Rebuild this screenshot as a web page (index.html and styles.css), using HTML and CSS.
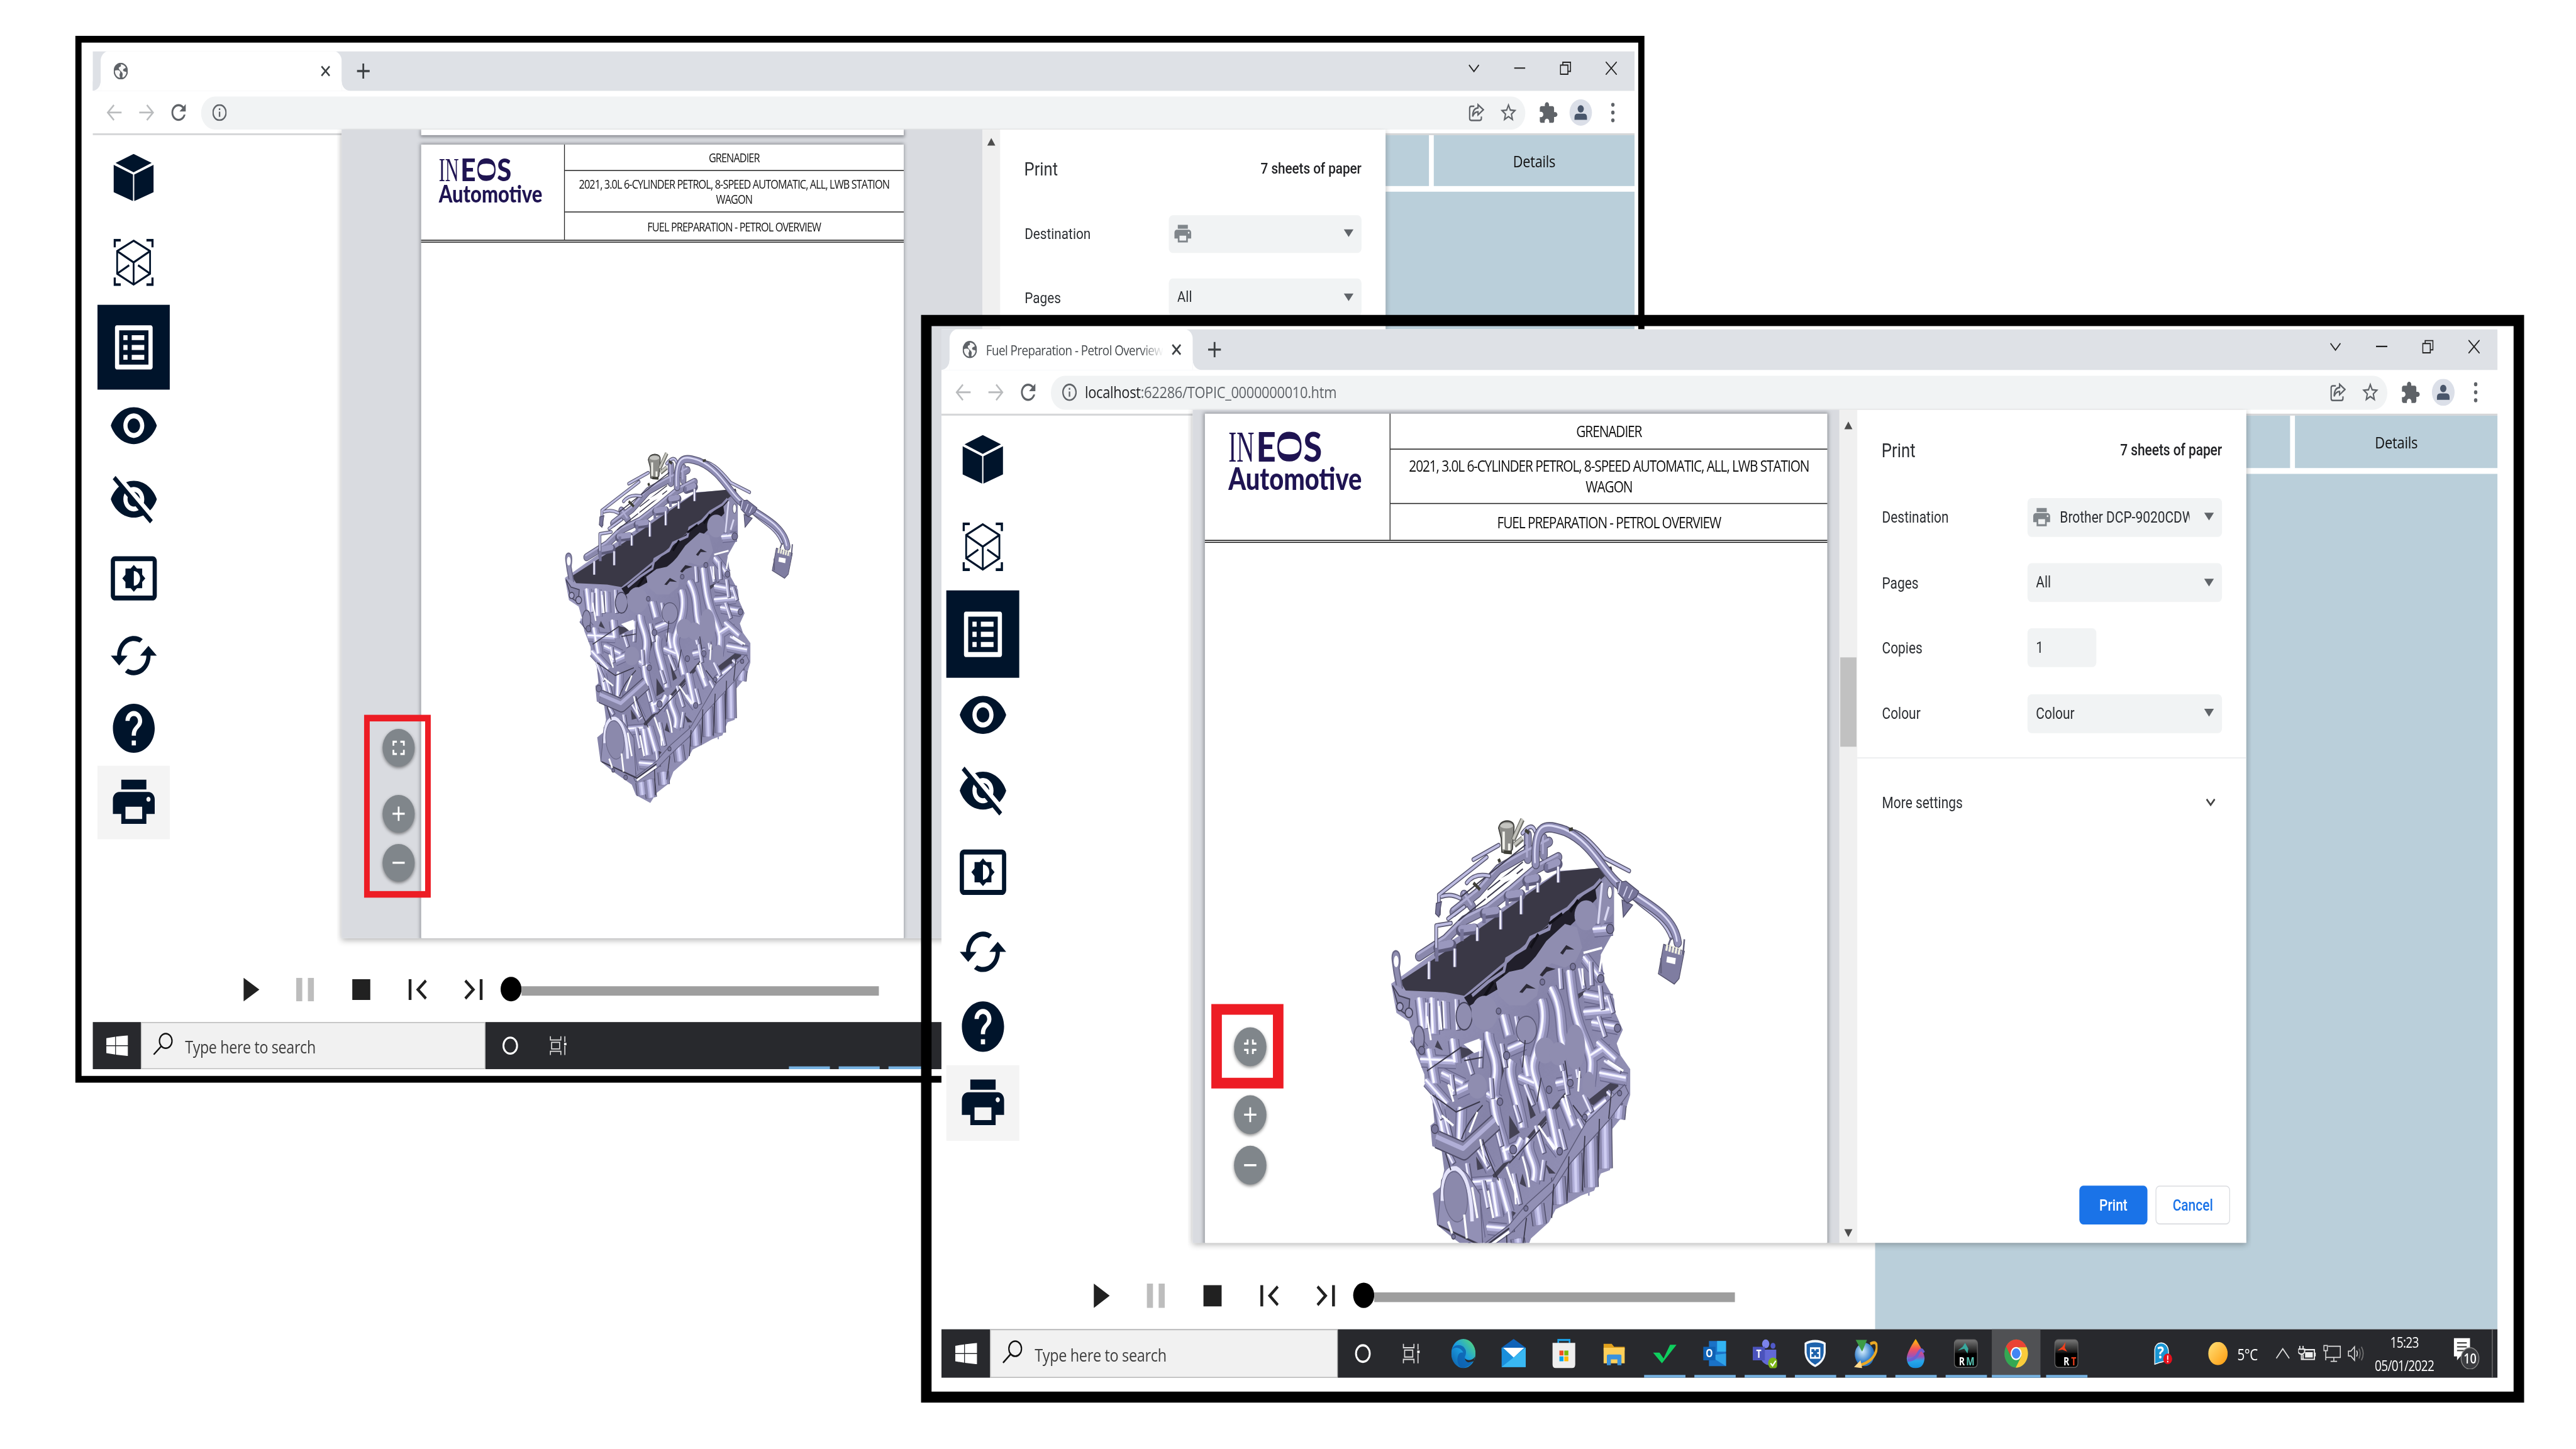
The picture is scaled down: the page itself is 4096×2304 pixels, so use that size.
FILE: index.html
```html
<!DOCTYPE html>
<html lang="en">
<head>
<meta charset="utf-8">
<title>Print preview zoom controls</title>
<link rel="stylesheet" href="styles.css">
</head>
<body>
<svg class="sprite" aria-hidden="true">
  <defs>
    <linearGradient id="g-body" x1="0" y1="0" x2="1" y2="1"><stop offset="0" stop-color="#a3a1c6"/><stop offset=".5" stop-color="#8583a8"/><stop offset="1" stop-color="#9c9abf"/></linearGradient>
    <linearGradient id="g-edge" x1="0" y1="1" x2="1" y2="0"><stop offset="0" stop-color="#0c59a4"/><stop offset=".5" stop-color="#1b9de2"/><stop offset="1" stop-color="#5fe06a"/></linearGradient>
    <linearGradient id="g-sun" x1="0" y1="0" x2="1" y2="1"><stop offset="0" stop-color="#ffe27a"/><stop offset="1" stop-color="#ff9a0c"/></linearGradient>
    <linearGradient id="g-app" x1="0" y1="0" x2="0" y2="1"><stop offset="0" stop-color="#777"/><stop offset=".45" stop-color="#1a1a1a"/><stop offset=".5" stop-color="#000"/></linearGradient>
    <linearGradient id="g-drop" x1="0" y1="0" x2="0" y2="1"><stop offset="0" stop-color="#ffc800"/><stop offset=".35" stop-color="#f4515c"/><stop offset=".6" stop-color="#a050b8"/><stop offset=".75" stop-color="#28a8ea"/><stop offset="1" stop-color="#1590e0"/></linearGradient>
    <radialGradient id="g-globe" cx=".4" cy=".35"><stop offset="0" stop-color="#d8f0ff"/><stop offset="1" stop-color="#2a78c8"/></radialGradient>
  </defs>

  <symbol id="i-cube" viewBox="0 0 50 50"><path d="M25 0 47.500 9.500 25 19.500 2.500 9.500zM0 11.500 24.200 21.800V50L0 40.500zM50 11.500 25.800 21.800V50L50 40.500z"/></symbol>
  <symbol id="i-wire" viewBox="0 0 50 50"><g fill="none" stroke="currentColor" stroke-width="2.200"><path d="M25 2 45.500 13V37L25 48.500 4.500 37V13zM4.500 13 25 25 45.500 13M25 25V48M4.500 37 19.500 28M45.500 37 30.500 28"/><path stroke-width="2.800" d="M1.400 9V1.400H9M41 1.400H48.600V9M1.400 41V48.600H9M41 48.600H48.600V41"/></g></symbol>
  <symbol id="i-list" viewBox="0 0 24 24"><path d="M19 5v14H5V5h14m1.100-2H3.900c-.5 0-.9.4-.9.9v16.200c0 .4.4.9.9.9h16.200c.4 0 .9-.5.9-.9V3.900c0-.5-.5-.9-.9-.9zM11 7h6v2h-6V7zm0 4h6v2h-6v-2zm0 4h6v2h-6zM7 7h2v2H7zm0 4h2v2H7zm0 4h2v2H7z"/></symbol>
  <symbol id="i-eye" viewBox="0 0 24 24"><path d="M12 4.500C7 4.500 2.730 7.610 1 12c1.730 4.390 6 7.500 11 7.500s9.270-3.110 11-7.500c-1.730-4.390-6-7.500-11-7.500zM12 17c-2.760 0-5-2.240-5-5s2.240-5 5-5 5 2.240 5 5-2.240 5-5 5zm0-8c-1.660 0-3 1.340-3 3s1.340 3 3 3 3-1.340 3-3-1.340-3-3-3z"/></symbol>
  <symbol id="i-eyeoff" viewBox="0 0 24 24"><path d="M12 4.500C7 4.500 2.730 7.610 1 12c1.730 4.390 6 7.500 11 7.500s9.270-3.110 11-7.500c-1.730-4.390-6-7.500-11-7.500zM12 17c-2.760 0-5-2.240-5-5s2.240-5 5-5 5 2.240 5 5-2.240 5-5 5zm0-8c-1.660 0-3 1.340-3 3s1.340 3 3 3 3-1.340 3-3-1.340-3-3-3z"/><path d="M4 2.200 22.200 20.400" stroke="#fff" stroke-width="2"/><path d="M2.600 3.200 20.400 21.200" stroke="currentColor" stroke-width="1.900"/></symbol>
  <symbol id="i-bright" viewBox="0 0 24 24"><path d="M21 3H3c-1.100 0-2 .9-2 2v14c0 1.100.9 2 2 2h18c1.100 0 2-.9 2-2V5c0-1.100-.9-2-2-2zm0 16.010H3V4.990h18v14.020zM8 16h2.500l1.500 1.500 1.500-1.500H16v-2.500l1.500-1.500-1.500-1.500V8h-2.500L12 6.500 10.500 8H8v2.500L6.500 12 8 13.500V16zm4-7c1.660 0 3 1.340 3 3s-1.340 3-3 3V9z"/></symbol>
  <symbol id="i-cycle" viewBox="0 0 24 24"><path d="M19 8l-4 4h3c0 3.310-2.690 6-6 6-1.010 0-1.970-.25-2.800-.7l-1.460 1.460C8.970 19.540 10.430 20 12 20c4.420 0 8-3.580 8-8h3l-4-4zM6 12c0-3.310 2.690-6 6-6 1.010 0 1.970.25 2.800.7l1.460-1.460C15.030 4.460 13.570 4 12 4c-4.420 0-8 3.580-8 8H1l4 4 4-4H6z"/></symbol>
  <symbol id="i-help" viewBox="0 0 24 24"><path d="M12 2C6.480 2 2 6.480 2 12s4.480 10 10 10 10-4.480 10-10S17.520 2 12 2zm1 17h-2v-2h2v2zm2.070-7.750l-.9.920C13.450 12.900 13 13.500 13 15h-2v-.5c0-1.100.45-2.100 1.170-2.830l1.240-1.260c.37-.36.59-.86.59-1.410 0-1.100-.9-2-2-2s-2 .9-2 2H8c0-2.210 1.790-4 4-4s4 1.790 4 4c0 .88-.36 1.680-.93 2.250z"/></symbol>
  <symbol id="i-print" viewBox="0 0 24 24"><path d="M19 8H5c-1.660 0-3 1.340-3 3v6h4v4h12v-4h4v-6c0-1.660-1.340-3-3-3zm-3 11H8v-5h8v5zm3-7c-.55 0-1-.45-1-1s.45-1 1-1 1 .45 1 1-.45 1-1 1zm-1-9H6v4h12V3z"/></symbol>
  <symbol id="i-full" viewBox="0 0 24 24"><path d="M7 14H5v5h5v-2H7v-3zm-2-4h2V7h3V5H5v5zm12 7h-3v2h5v-5h-2v3zM14 5v2h3v3h2V5h-5z"/></symbol>
  <symbol id="i-fullexit" viewBox="0 0 24 24"><path d="M5 16h3v3h2v-5H5v2zm3-8H5v2h5V5H8v3zm6 11h2v-3h3v-2h-5v5zm2-11V5h-2v5h5V8h-3z"/></symbol>
  <symbol id="i-plus" viewBox="0 0 24 24"><path d="M19 13h-6v6h-2v-6H5v-2h6V5h2v6h6z"/></symbol>
  <symbol id="i-minus" viewBox="0 0 24 24"><path d="M5 11h14v2H5z"/></symbol>
  <symbol id="i-globe" viewBox="0 0 20 20"><circle cx="10" cy="10" r="9.900"/><path d="M2 9.500C4.500 8.500 8 8.500 9 10.500 10 12.500 7.500 13.500 8.500 15.500L9 18C4.500 17.500 1.500 13.500 2 9.500zM7.500 7.500C6.500 5 9 5.500 10 4.500 10.800 3.500 9.500 2 10 2 13 1.800 15.500 3.500 16.800 5.500 17 7 14.500 6.500 13.500 8 12.500 9.500 14 10.500 15.500 10.500 17 10.500 18 11 17.800 12 17 15.500 14.500 17.300 12.500 17.800 11.500 16.500 13 15 12.500 13 12 11 9 10 7.500 7.500z" fill="#fff" opacity=".95"/></symbol>
  <symbol id="i-info" viewBox="2 2 20 20"><path d="M11 7h2v2h-2zm0 4h2v6h-2zm1-9C6.480 2 2 6.480 2 12s4.480 10 10 10 10-4.480 10-10S17.520 2 12 2zm0 18c-4.410 0-8-3.590-8-8s3.590-8 8-8 8 3.590 8 8-3.590 8-8 8z"/></symbol>
  <symbol id="i-reload" viewBox="3 3 18 18"><path d="M17.650 6.350C16.200 4.900 14.210 4 12 4c-4.420 0-7.990 3.580-7.990 8s3.570 8 7.990 8c3.730 0 6.840-2.550 7.730-6h-2.080c-.82 2.330-3.040 4-5.650 4-3.310 0-6-2.690-6-6s2.690-6 6-6c1.660 0 3.140.69 4.220 1.780L13 11h7V4l-2.350 2.350z"/></symbol>
  <symbol id="i-back" viewBox="0 0 20 20"><path d="M19 10H2M9.500 2 1.800 10l7.700 8" fill="none" stroke="currentColor" stroke-width="1.900"/></symbol>
  <symbol id="i-fwd" viewBox="0 0 20 20"><path d="M1 10H18M10.500 2 18.200 10l-7.700 8" fill="none" stroke="currentColor" stroke-width="1.900"/></symbol>
  <symbol id="i-share" viewBox="0 0 24 24"><g fill="none" stroke="currentColor" stroke-width="2"><path d="M9 4H4.500Q2 4 2 6.500V19.500Q2 22 4.500 22H17Q19.500 22 19.500 19.500V17"/><path d="M14.500 2 22.500 8.500 14.500 15V11Q9 11 6.500 17 6.500 6.500 14.500 6z"/></g></symbol>
  <symbol id="i-star" viewBox="1 1 22 22"><path d="M22 9.240l-7.190-.62L12 2 9.190 8.630 2 9.240l5.460 4.730L5.820 21 12 17.270 18.180 21l-1.630-7.030L22 9.240zM12 15.400l-3.760 2.270 1-4.280-3.320-2.880 4.380-.38L12 6.100l1.710 4.040 4.380.38-3.320 2.880 1 4.280L12 15.400z"/></symbol>
  <symbol id="i-ext" viewBox="1 0 23 23"><path d="M20.500 11H19V7c0-1.100-.9-2-2-2h-4V3.500C13 2.120 11.880 1 10.500 1S8 2.120 8 3.500V5H4c-1.100 0-1.990.9-1.990 2v3.800H3.500c1.490 0 2.700 1.210 2.700 2.700s-1.210 2.700-2.700 2.700H2V20c0 1.100.9 2 2 2h3.800v-1.500c0-1.490 1.210-2.700 2.700-2.700 1.490 0 2.700 1.210 2.700 2.700V22H17c1.100 0 2-.9 2-2v-4h1.500c1.380 0 2.500-1.120 2.500-2.500S21.880 11 20.500 11z"/></symbol>
  <symbol id="i-person" viewBox="0 0 36 36"><circle cx="18" cy="18" r="18" fill="#dbdfe8"/><circle cx="18" cy="13" r="5" fill="#49566b"/><path d="M8 28V24.500Q8 19.500 13 19.500H23Q28 19.500 28 24.500V28z" fill="#49566b"/></symbol>
  <symbol id="i-kebab" viewBox="0 0 6 24"><circle cx="3" cy="3" r="2.300"/><circle cx="3" cy="12" r="2.300"/><circle cx="3" cy="21" r="2.300"/></symbol>
  <symbol id="i-x" viewBox="0 0 12 12"><path d="M1 1 11 11M11 1 1 11" fill="none" stroke="currentColor" stroke-width="1.900"/></symbol>
  <symbol id="i-add" viewBox="0 0 16 16"><path d="M8 0V16M0 8H16" fill="none" stroke="currentColor" stroke-width="2.200"/></symbol>
  <symbol id="i-wdown" viewBox="0 0 16 16"><path d="M1 4 8 12 15 4" fill="none" stroke="currentColor" stroke-width="1.500"/></symbol>
  <symbol id="i-expand" viewBox="0 0 12 12"><path d="M1 3 6 9 11 3" fill="none" stroke="currentColor" stroke-width="2"/></symbol>
  <symbol id="i-wmin" viewBox="0 0 14 14"><path d="M0 6.800H14" stroke="currentColor" stroke-width="1.400"/></symbol>
  <symbol id="i-wmax" viewBox="0 0 14 14"><path d="M.7 3.700H10V13.300H.7zM3.700 3.500V.7H13.300V10.300H10.200" fill="none" stroke="currentColor" stroke-width="1.300"/></symbol>
  <symbol id="i-wclose" viewBox="0 0 14 14"><path d="M0 0 14 14M14 0 0 14" stroke="currentColor" stroke-width="1.300"/></symbol>
  <symbol id="i-play" viewBox="0 0 25 25"><path d="M3 0 22.600 12.500 3 25z"/></symbol>
  <symbol id="i-pause" viewBox="0 0 25 25"><path d="M1.500 0H9V25H1.500zM16 0H23.500V25H16z"/></symbol>
  <symbol id="i-stop" viewBox="0 0 25 25"><path d="M1.300 1.500H23.700V23.500H1.300z"/></symbol>
  <symbol id="i-prev" viewBox="0 0 25 25"><path d="M1.500 1.500H5V23.500H1.500z"/><path d="M23 3 13 12.500 23 22" fill="none" stroke="currentColor" stroke-width="3.200"/></symbol>
  <symbol id="i-next" viewBox="0 0 25 25"><path d="M20 1.500H23.500V23.500H20z"/><path d="M2 3 12 12.500 2 22" fill="none" stroke="currentColor" stroke-width="3.200"/></symbol>

  <symbol id="t-win" viewBox="0 0 27 22"><path d="M0 3 11 1.600V10.500H0zM12 1.400 27 0V10.500H12zM0 11.500H11V20.400L0 19zM12 11.500H27V22L12 20.600z" fill="#fff"/></symbol>
  <symbol id="t-search" viewBox="0 0 25 24"><circle cx="16" cy="9" r="7.800" fill="none" stroke="#111" stroke-width="1.700"/><path d="M10.500 14.500 1 23.500" stroke="#111" stroke-width="1.800"/></symbol>
  <symbol id="t-cortana" viewBox="0 0 30 30"><circle cx="15" cy="15" r="8.500" fill="none" stroke="#fff" stroke-width="2.300"/></symbol>
  <symbol id="t-view" viewBox="0 0 30 30"><path d="M3 5V9H16V5M3 25V21H16V25M4.500 11.500H14.500V18.500H4.500zM21 5V11M21 15V25" fill="none" stroke="#ddd" stroke-width="1.300"/><path d="M20 12H23V14.500H20z" fill="#fff"/></symbol>
  <symbol id="t-edge" viewBox="0 0 30 30"><circle cx="15" cy="15" r="15" fill="url(#g-edge)"/><path d="M1 11C3 5 15 4 18 12 19 17 16 18 17 20 20 23 27 22 28.500 20 26 27 18 30 13 29.800 8 28 6 21 9 16 11 13 15 14 15 14 11 8 4 8 1 11z" fill="#0d5eae" opacity=".8"/><path d="M17 20C20 23 27 22 29.500 18L28 23 21 24Q17 23 17 20z" fill="#28292d"/></symbol>
  <symbol id="t-mail" viewBox="0 0 30 30"><path d="M0 9 15 0 30 9V13H0z" fill="#0e62b8"/><path d="M0 9H30V29H0z" fill="#1a8fdc"/><path d="M30 9V29H0z" fill="#39b8f3"/><path d="M2 9H28L15 19z" fill="#fff"/></symbol>
  <symbol id="t-store" viewBox="0 0 30 30"><path d="M8 8V1H22V8" fill="none" stroke="#1b9de2" stroke-width="2"/><path d="M1 4H29V26Q29 30 25 30H5Q1 30 1 26z" fill="#eee"/><path d="M9.500 12H14.500V17H9.500z" fill="#f25022"/><path d="M15.500 12H20.500V17H15.500z" fill="#7fba00"/><path d="M9.500 18H14.500V23H9.500z" fill="#00a4ef"/><path d="M15.500 18H20.500V23H15.500z" fill="#ffb900"/></symbol>
  <symbol id="t-folder" viewBox="0 0 30 30"><path d="M2 5H12L15 8H28V12H2z" fill="#e0a01c"/><path d="M2 9H28V25H2z" fill="#fdcf5a"/><path d="M6 17Q6 16 8 16H22Q24 16 24 17V27H19V21H11V27H6z" fill="#3a92dc"/></symbol>
  <symbol id="t-check" viewBox="0 0 30 30"><path d="M1 14H9L14 20 22 6H30L12 25z" fill="#0fce5e"/></symbol>
  <symbol id="t-outlook" viewBox="0 0 30 30"><path d="M8 2H29V28H8z" fill="#1a72c8"/><path d="M18 2H29V13H18z" fill="#33b4f2"/><path d="M8 17 29 28V15z" fill="#2fa2e8"/><path d="M1 8H16V22H1z" fill="#0f61b4"/><text x="8.500" y="19" class="glyph">O</text></symbol>
  <symbol id="t-teams" viewBox="0 0 30 30"><circle cx="16" cy="5" r="4.500" fill="#7b83eb"/><circle cx="25" cy="7" r="3" fill="#5059c9"/><path d="M10 11H29V20Q27 27 20 27 12 26 10 20z" fill="#6269d6"/><path d="M0 8H15V22H0z" fill="#4b53bc"/><text x="7.500" y="19.500" class="glyph">T</text><circle cx="25" cy="25" r="6" fill="#7cb516"/><path d="M22 25 24.500 27.500 28.500 22.500" fill="none" stroke="#fff" stroke-width="1.600"/></symbol>
  <symbol id="t-shield" viewBox="0 0 30 30"><path d="M15 1Q22 1 28 4V14Q27 24 15 29 3 24 2 14V4Q8 1 15 1z" fill="#f4f8fc"/><path d="M15 3.500Q21 3.500 25.500 5.500V14Q25 22 15 26.500 5 22 4.500 14V5.500Q9 3.500 15 3.500z" fill="#1d62ac"/><path d="M9.500 9.500H20.500V19.500H9.500zM9 14.500H12.500M17.500 14.500H21M15 9V12M15 17V20" fill="none" stroke="#fff" stroke-width="1.800"/></symbol>
  <symbol id="t-idm" viewBox="0 0 30 30"><circle cx="14" cy="16" r="12" fill="url(#g-globe)"/><path d="M3 1H17L11 13z" fill="#3d9c46"/><path d="M21 5Q30 1 29 10 26 23 8 27" fill="none" stroke="#eaa926" stroke-width="3"/><path d="M9 22 1 29 11 30z" fill="#ffd88a"/></symbol>
  <symbol id="t-drop" viewBox="0 0 30 30"><path d="M15 0Q26 14 26 20 25 30 15 30 5 30 4 20 4 14 15 0z" fill="url(#g-drop)"/><path d="M5 22Q14 22 18 15T25 14" fill="none" stroke="#6b5fd0" stroke-width="3"/></symbol>
  <symbol id="t-rm" viewBox="0 0 30 30"><rect x=".8" y=".8" width="28.400" height="28.400" rx="4" fill="url(#g-app)" stroke="#666"/><path d="M14 4 18 10 17 15 13 10 5 12 11 8z" fill="#38a89d"/><text x="10" y="27" class="glyph">R</text><text x="20.500" y="27" class="glyph teal">M</text></symbol>
  <symbol id="t-rt" viewBox="0 0 30 30"><rect x=".8" y=".8" width="28.400" height="28.400" rx="4" fill="url(#g-app)" stroke="#666"/><path d="M14 3 13 9 16 13 10 11 4 12 10 8z" fill="#f0401c"/><text x="15" y="27" class="glyph">R</text><text x="24" y="27" class="glyph red">T</text></symbol>
  <symbol id="t-chrome" viewBox="0 0 30 30"><circle cx="15" cy="15" r="14.500" fill="#34a853"/><path d="M2.500 7.500A14.500 14.500 0 0 1 28 8.500H15L8.500 18z" fill="#ea4335"/><path d="M28 8.500A14.500 14.500 0 0 1 14.500 29.500L21 18.500Q22 12 18 8.500z" fill="#fbcb3b"/><circle cx="15" cy="15" r="6.800" fill="#fff"/><circle cx="15" cy="15" r="5.300" fill="#4285f4"/></symbol>
  <symbol id="t-help" viewBox="0 0 24 24"><path d="M2 8Q3 1 10 1 19 2 19 11 19 20 9 21L2 23z" fill="#1996d4" stroke="#fff"/><text x="9.500" y="17" class="glyph big">?</text><circle cx="18" cy="17.500" r="5.500" fill="#e5101c"/><path d="M17.300 14H18.700V18.500H17.300zM17.300 19.500H18.700V21H17.300z" fill="#fff"/></symbol>
  <symbol id="t-sun" viewBox="0 0 24 24"><circle cx="12" cy="12" r="12" fill="url(#g-sun)"/></symbol>
  <symbol id="t-up" viewBox="0 0 20 12"><path d="M2 11 10 1 18 11" fill="none" stroke="#ddd" stroke-width="1.300"/></symbol>
  <symbol id="t-batt" viewBox="0 0 22 16"><path d="M7 4H20V14H6V9M21 7V11M2 0V3M6 0V3M0 3.500H8V6Q7 8.500 4 8.500 1 8.500 0 6zM4 8.500V14H6" fill="none" stroke="#eee" stroke-width="1.400"/><path d="M8.500 6.500H18V12H8.500z" fill="#eee"/></symbol>
  <symbol id="t-net" viewBox="0 0 22 18"><path d="M6 1.500H21V13H3V7M13 13V17M9 17H17M.7.7H5V6H.7zM3 6V16" fill="none" stroke="#ddd" stroke-width="1.200"/></symbol>
  <symbol id="t-vol" viewBox="0 0 22 18"><path d="M1 6.500H4L8.500 2V16L4 11.500H1zM11 6Q13 9 11 12" fill="none" stroke="#ddd" stroke-width="1.200"/><path d="M14 4Q17 9 14 14M17 2Q21.500 9 17 16" fill="none" stroke="#777" stroke-width="1.200"/></symbol>
  <symbol id="t-note" viewBox="0 0 34 32"><path d="M0 0H20V19H8L4 23V19H0z" fill="#fff"/><path d="M4 5H16M4 9H16M4 13H16" stroke="#333" stroke-width="1.300"/><circle cx="20" cy="21" r="11" fill="#3b3c40" stroke="#888"/><text x="20" y="26.500" class="glyph wide">10</text></symbol>

  <symbol id="engine" viewBox="0 0 1500 1568" preserveAspectRatio="none">
    <defs>
      <path id="e-runners" d="M800 620C850 690 825 740 850 790M868 570C880 650 885 700 925 770S950 850 945 905M762 655C790 720 750 790 735 830S755 900 775 980M562 750C560 790 600 820 590 880S575 960 615 1060L635 1125M650 830C630 880 670 920 692 1030M845 945 885 1025M795 975 825 1090M715 1060C700 1110 755 1130 735 1185M605 1180 640 1275M535 1090 570 1150M305 650 318 740M352 650 358 755M395 660 400 740M340 800 362 900M372 950 405 1090M460 970 455 1080M690 1060 660 1110M580 1190 600 1290M500 1180 530 1350M430 770 440 840M620 700 640 760M700 820 715 880"/>
      <path id="e-fine" d="M330 660V735M375 655 380 740M440 650 445 740M480 820 500 870M535 770 530 850M610 780 625 850M665 700 680 770M830 560 835 620M845 860 860 930M905 560 920 620M945 540 950 610M980 610 990 680M920 930 950 980M420 870 430 930M350 930 385 1000M400 1000 420 1060M500 1060 560 1140M540 1180 560 1260M590 1020 610 1080M655 1160 680 1250M700 900 730 960M740 1020 770 1100M830 1030 850 1090M900 1000 920 1030M770 1120 760 1180M410 1100 430 1130M480 1130 490 1180M640 1270 650 1330M460 1290 470 1330M510 1300 530 1360M975 700 1000 760M1010 640 1030 690M1000 830 1060 860M1010 920 1060 960M660 960 680 1010M820 800 840 860M890 830 900 880M570 880 575 940M300 730 310 790"/>
      <path id="e-stubs" d="M925 640 1028 655M925 692 1025 685M955 722 1050 735M975 780 1045 830M985 870 1085 885M925 530 985 590M960 450 1030 445M440 925 510 900M500 1190 580 1185M560 930 605 950M640 800 700 780M560 1320 630 1325M310 830 440 835M390 870 470 900M330 890 410 960M930 1000 1010 950M620 1100 680 1080M790 1060 830 1100M680 880 740 900M820 900 880 890M950 820 1000 795M280 760 320 800"/>
      <path id="e-pan" d="M605 1380 615 1450M672 1350 678 1400M745 1250 755 1310M825 1170 832 1250M888 1100 892 1215M945 1050 950 1200M1000 1000 1003 1145M1055 960 1050 1000M565 1390 572 1440"/>
      <path id="e-pipe" d="M368 1060 470 1095 590 1010"/>
      <path id="e-harness" d="M740 255C732 130 780 140 850 158 960 195 1000 290 1070 325 1150 370 1262 405 1275 485"/>
      <path id="e-thin" d="M505 242 600 200M375 345 555 235M375 345V400M830 160C900 145 950 190 1000 238L1092 275M690 165Q725 130 738 160M385 350Q420 340 455 355M365 520V435L420 428M480 310Q510 280 565 290M410 415 470 380M1110 355C1170 400 1220 410 1250 470"/>
      <path id="e-rail" d="M300 525 400 475 470 420 560 385 650 330 740 270 825 235M430 395 520 340 600 270 690 230 790 190M470 345 500 380M710 170V240M770 180V230"/>
    </defs>
    <path fill="url(#g-body)" d="M195 605 215 690 262 715 278 760 290 810 320 870 322 895 348 925 358 1010 343 1020 350 1080 385 1090 395 1150 380 1200 352 1218 368 1310 430 1350 520 1400 540 1440 610 1470 640 1432 700 1395 722 1350 790 1302 815 1265 865 1245 910 1225 960 1210 985 1160 1020 1150 1028 1030 1075 985 1096 930 1096 855 1060 815 1045 780 1068 740 1040 690 1035 650 1000 600 985 520 1035 450 1035 320 1020 265 830 275 400 490z"/>
    <g fill="#444254"><path d="M930 950 1045 880 1052 905 960 962zM570 1170 690 1070 860 915 845 950 680 1090 590 1172zM955 805 1020 782 1000 800zM775 1130 815 1160 790 1160zM455 790 520 800 460 825zM885 640 950 615 900 650zM600 800 620 860 605 900zM640 990 680 1040 640 1060zM515 1110 545 1145 520 1150zM705 930 740 990 720 1000zM820 740 845 770 848 700zM430 1080 470 1090 460 1110zM370 770 390 800 360 790zM690 1160 705 1200 680 1190zM640 1265 665 1275 650 1290z"/></g>
    <g fill="none" stroke-linejoin="round">
      <g stroke="#67658a"><use href="#e-stubs" stroke-width="40"/><use href="#e-runners" stroke-width="42"/></g>
      <g stroke="#8f8db3"><use href="#e-stubs" stroke-width="34"/><use href="#e-runners" stroke-width="36"/></g>
      <g stroke="#b3b1da" transform="translate(-4 -3)"><use href="#e-stubs" stroke-width="19"/><use href="#e-runners" stroke-width="22"/></g>
      <g stroke="#e4e3fb" transform="translate(-6 -5)"><use href="#e-stubs" stroke-width="8"/><use href="#e-runners" stroke-width="11"/></g>
      <g stroke="#fff" transform="translate(-6 -5)"><use href="#e-stubs" stroke-width="3"/><use href="#e-runners" stroke-width="5"/></g>
      <use href="#e-fine" stroke="#5b5977" stroke-width="17" transform="translate(4 2)"/>
      <use href="#e-fine" stroke="#a3a1c8" stroke-width="15"/>
      <use href="#e-fine" stroke="#eeedff" stroke-width="6" transform="translate(-3 0)"/>
      <use href="#e-pan" stroke="#4b4963" stroke-width="55"/>
      <use href="#e-pan" stroke="#8886ab" stroke-width="49"/>
      <use href="#e-pan" stroke="#b1afd9" stroke-width="26"/>
      <use href="#e-pan" stroke="#cfcef2" stroke-width="10"/>
      <use href="#e-pipe" stroke="#4f4d68" stroke-width="54"/>
      <use href="#e-pipe" stroke="#8785a8" stroke-width="46"/>
      <use href="#e-pipe" stroke="#b0aed6" stroke-width="14" transform="translate(-4 -8)"/>
    </g>
    <path fill="#9290b5" stroke="#5c5a78" stroke-width="3" d="M530 1375 640 1310 705 1250 805 1180 930 1010 1075 900 1090 925 1020 1000 870 1130 800 1215 700 1290 645 1335 540 1390zM385 1180Q420 1120 480 1160L530 1220 540 1370 370 1310z"/>
    <path d="M388 1240Q385 1140 440 1145 495 1165 500 1300" fill="none" stroke="#e4e3fa" stroke-width="13"/>
    <ellipse cx="438" cy="1228" rx="44" ry="74" fill="#8b89ac" stroke="#6a6888" stroke-width="3" transform="rotate(-8 438 1228)"/>
    <path d="M375 1312 545 1375 640 1320" fill="none" stroke="#3b3949" stroke-width="5"/>
    <path d="M545 1383 640 1330M500 1200 520 1290M560 1210 580 1290M630 1140 670 1230M410 1300 425 1335M470 1280 480 1350" fill="none" stroke="#fff" stroke-width="8"/>
    <g fill="#8f8db0"><circle cx="520" cy="905" r="36"/><circle cx="775" cy="800" r="38"/><circle cx="825" cy="810" r="34"/><ellipse cx="888" cy="790" rx="38" ry="66"/><ellipse cx="940" cy="900" rx="24" ry="38"/><ellipse cx="705" cy="740" rx="38" ry="40" stroke="#55536f" stroke-width="3"/><ellipse cx="470" cy="700" rx="30" ry="40" stroke="#44425a" stroke-width="4"/><ellipse cx="300" cy="765" rx="20" ry="36" stroke="#55536f" stroke-width="4"/></g>
    <g fill="none" stroke="#3a384a" stroke-width="4"><path d="M330 860 460 790M350 930 440 980 530 950M600 1180Q560 1120 540 1060M880 960 930 1010M640 1130Q700 1080 780 1010M470 830 540 820M400 1100 420 1150M700 770 690 850M760 880 745 950M850 830 860 880M540 960Q480 1010 460 1060M980 1000 975 1150M925 1050 915 1210M865 1110 858 1240M808 1190 800 1290M1025 920 1015 1000M705 1290 690 1380M630 1340 635 1440"/></g>
    <g fill="none" stroke="#fff" stroke-width="7"><path d="M330 700 345 770M375 670 385 740M430 920 410 900 430 950M750 1020 810 1090M690 1110Q710 1160 715 1200M520 980 490 1040M530 1060 550 1130M850 930 870 990M990 520 980 570M920 610 915 560M1010 830 1070 860M660 1190 665 1250M905 860 900 920M385 990 430 1020M920 515 990 500"/></g>
    <path d="M468 782 528 765 536 800 508 808z" fill="#fff"/>
    <path fill="#3a3846" d="M228 598 480 470 830 277 1025 262 1028 272 850 390 640 530 470 640 400 630 250 625z"/>
    <path fill="#211f2b" d="M470 645 500 630 640 540 760 450 830 410 900 360 985 300 1000 330 930 390 850 450 740 530 600 620 490 670z"/>
    <path d="M500 640 560 600 620 568 630 532 700 500 720 470 790 445 800 412 860 385 900 350 960 322 985 300" fill="none" stroke="#8f8db2" stroke-width="10"/>
    <path d="M540 650 580 600M590 620 620 580M720 500 750 460M790 430 840 400M870 395 900 360" stroke="#111018" stroke-width="9"/>
    <g fill="#8f8db0"><circle cx="547" cy="690" r="50"/><path d="M590 600 640 570 700 560 740 525 780 480 850 430 895 440 915 500 890 540 850 558 800 545 760 570 745 640 700 668 640 668 600 640z"/><circle cx="930" cy="405" r="44"/><path d="M965 330 1010 290 1035 330 1030 400 985 440z"/></g>
    <path d="M678 630 705 605 740 620 705 618 690 632zM755 580 780 555 815 562 782 570 765 584zM832 515 855 492 885 505 855 505 842 520z" fill="#2d2b38"/>
    <path d="M975 430 990 310M1000 420 1015 380" stroke="#d9d8f2" stroke-width="8"/>
    <ellipse cx="1019" cy="338" rx="9" ry="18" fill="#fff" stroke="#63617f" stroke-width="3"/>
    <g fill="none" stroke-linejoin="round" stroke-linecap="round">
      <use href="#e-rail" stroke="#514f6a" stroke-width="30"/><use href="#e-rail" stroke="#8a88ac" stroke-width="25"/><use href="#e-rail" stroke="#aeacd2" stroke-width="7" transform="translate(-3 -7)"/>
      <path d="M450 420 690 270M460 350 700 200M560 330 690 250" stroke="#3b394c" stroke-width="4"/>
      <path d="M370 500 425 492M455 450 510 445M545 400 595 395M635 350 685 345M705 305 745 300M785 265 825 255" stroke="#5d5b7a" stroke-width="32"/><path d="M370 495 420 487M458 445 507 440M548 395 592 390M637 345 682 340M708 300 742 295M788 260 822 250" stroke="#9a98be" stroke-width="22"/>
      <use href="#e-thin" stroke="#57556f" stroke-width="14"/><use href="#e-thin" stroke="#bebde2" stroke-width="8"/>
      <use href="#e-harness" stroke="#57556f" stroke-width="31"/><use href="#e-harness" stroke="#8f8db5" stroke-width="25"/><use href="#e-harness" stroke="#dcdbf6" stroke-width="6" transform="translate(-3 -5)"/>
    </g>
    <path d="M338 540V592M435 502V556M520 440V480M608 390V446M685 347V402M748 310V338M825 262V309M367 500V540M462 445V480M545 400V428M632 355V377M708 310V332M780 255V275" stroke="#77759a" stroke-width="13"/>
    <path d="M337 540V592M434 502V556M519 440V480M607 390V446M684 347V402M747 310V338M824 262V309" stroke="#f0effc" stroke-width="7"/>
    <path d="M602 300 660 275 675 290 620 310zM545 345 560 335 555 365z" fill="#fff"/>
    <path d="M600 150Q605 130 632 129 660 130 658 150L652 212Q640 228 612 220L610 180z" fill="#8d8d89" stroke="#3f3f3c" stroke-width="4"/><path d="M619 160V212M640 195V215" stroke="#f0f0ea" stroke-width="9"/><path d="M655 185 690 125M660 200 690 180" stroke="#6f6f69" stroke-width="17"/><path d="M655 183 690 123M660 198 690 178" stroke="#c4c4bd" stroke-width="9"/><ellipse cx="630" cy="143" rx="24" ry="8" fill="#c4c4c0"/>
    <path d="M865 155 880 152M700 155 715 165M505 310 530 330M600 240 605 250M620 220 650 222" stroke="#3d3d35" stroke-width="10"/>
    <path d="M365 370 385 365 375 410 362 400zM1045 310 1080 305 1128 335 1120 350 1085 370 1050 340zM1065 360 1105 375 1070 410z" fill="#77759a" stroke="#4f4d69" stroke-width="3"/>
    <path d="M1060 305 1050 340M1085 320 1070 350M1105 330 1090 355" stroke="#d5d4f0" stroke-width="4"/>
    <path d="M1222 490 1300 510 1280 590 1262 606 1202 576z" fill="#7f7da1" stroke="#56546f" stroke-width="3"/><path d="M1230 498 1290 512" stroke="#eeeedf" stroke-width="20" stroke-dasharray="8 4"/><path d="M1235 525 1268 530 1265 548 1232 542z" fill="#fff"/><path d="M1212 530V575M1250 470 1240 492M1300 475 1295 520" stroke="#63617e" stroke-width="6"/>
    <path d="M238 620 225 560Q235 512 214 509 195 510 200 540 205 575 215 610" fill="#8f8db0" stroke="#6a6888" stroke-width="5"/><ellipse cx="214" cy="540" rx="9" ry="17" fill="#fff"/>
    <path d="M200 610 225 640 265 650 260 700 225 680z" fill="#8583a7" stroke="#45435a" stroke-width="4"/><circle cx="228" cy="672" r="12" fill="#a5a3c9" stroke="#45435a" stroke-width="4"/><circle cx="262" cy="690" r="14" fill="#9c9abf" stroke="#45435a" stroke-width="4"/>
    <g fill="#77759a" stroke="#4a4860" stroke-width="3"><circle cx="1020" cy="445" r="14"/><circle cx="985" cy="590" r="12"/><circle cx="1048" cy="735" r="12"/><circle cx="600" cy="685" r="9"/><circle cx="880" cy="555" r="10"/><circle cx="765" cy="600" r="9"/><circle cx="655" cy="1090" r="13"/><circle cx="830" cy="1095" r="11"/><circle cx="925" cy="995" r="9"/><circle cx="605" cy="950" r="11"/><circle cx="870" cy="895" r="11"/><circle cx="790" cy="915" r="11"/><circle cx="360" cy="1030" r="13"/><circle cx="703" cy="1262" r="8"/><circle cx="1056" cy="925" r="8"/><circle cx="430" cy="1345" r="7"/><circle cx="490" cy="1372" r="9"/><circle cx="310" cy="800" r="12"/><circle cx="630" cy="815" r="12"/></g>
    <path d="M940 1208V1225" stroke="#9a98bd" stroke-width="6"/>
  </symbol>
</svg>

<main class="canvas">

  <section class="frame frame-back">
    <div class="screen">
      <header class="tabs">
        <div class="tab"><svg class="favicon"><use href="#i-globe"/></svg><span class="tab-title"></span><svg class="tab-x"><use href="#i-x"/></svg></div>
        <svg class="tab-add"><use href="#i-add"/></svg>
        <div class="controls"><svg><use href="#i-wdown"/></svg><svg><use href="#i-wmin"/></svg><svg><use href="#i-wmax"/></svg><svg><use href="#i-wclose"/></svg></div>
      </header>
      <nav class="toolbar">
        <div class="history"><svg class="dim"><use href="#i-back"/></svg><svg class="dim"><use href="#i-fwd"/></svg><svg><use href="#i-reload"/></svg></div>
        <div class="omnibox"><svg class="info"><use href="#i-info"/></svg><span class="url"></span><svg class="share"><use href="#i-share"/></svg><svg class="star"><use href="#i-star"/></svg></div>
        <div class="extras"><svg class="ext"><use href="#i-ext"/></svg><svg class="avatar"><use href="#i-person"/></svg><svg class="kebab"><use href="#i-kebab"/></svg></div>
      </nav>
      <div class="app">
        <div class="work">
          <aside class="rail">
            <div class="tool h90"><svg class="s50"><use href="#i-cube"/></svg></div>
            <div class="tool h90"><svg class="s50"><use href="#i-wire"/></svg></div>
            <div class="tool h90 on"><svg><use href="#i-list"/></svg></div>
            <div class="tool h77"><svg><use href="#i-eye"/></svg></div>
            <div class="tool h77"><svg><use href="#i-eyeoff"/></svg></div>
            <div class="tool h91"><svg><use href="#i-bright"/></svg></div>
            <div class="tool h75"><svg><use href="#i-cycle"/></svg></div>
            <div class="tool h79"><svg><use href="#i-help"/></svg></div>
            <div class="tool h78 hover"><svg><use href="#i-print"/></svg></div>
          </aside>
          <div class="player">
            <svg><use href="#i-play"/></svg><svg class="off"><use href="#i-pause"/></svg><svg><use href="#i-stop"/></svg><svg class="prev"><use href="#i-prev"/></svg><svg><use href="#i-next"/></svg>
            <div class="slider"><span class="knob"></span><span class="track"></span></div>
          </div>
        </div>
        <div class="panel"><div class="panel-tabs"><div class="panel-tab"></div><div class="panel-tab">Details</div></div><div class="panel-body"></div></div>
      </div>
      <footer class="taskbar">
        <div class="start"><svg><use href="#t-win"/></svg></div>
        <div class="search"><svg><use href="#t-search"/></svg><span>Type here to search</span></div>
        <div class="apps">
          <div class="task"><svg><use href="#t-cortana"/></svg></div><div class="task"><svg><use href="#t-view"/></svg></div><div class="task"></div><div class="task"></div><div class="task"></div><div class="task"></div><div class="task run"></div><div class="task run"></div><div class="task run"></div>
        </div>
      </footer>
      <div class="dialog">
        <div class="preview">
          <div class="sheet-end"></div>
          <article class="sheet">
            <div class="sheet-head">
              <div class="logo"><svg viewBox="0 0 129 50"><text class="serif" x="0" y="24.500" textLength="25" lengthAdjust="spacingAndGlyphs">IN</text><text class="heavy" x="27" y="24.500" textLength="19" lengthAdjust="spacingAndGlyphs">E</text><text class="ring" transform="translate(47.500 26.200) rotate(-90)" textLength="27.500" lengthAdjust="spacingAndGlyphs" x="0" y="23">O</text><text class="heavy" x="72.500" y="24.500" textLength="18" lengthAdjust="spacingAndGlyphs">S</text><text class="brand" x="0" y="47.500" textLength="129" lengthAdjust="spacingAndGlyphs">Automotive</text></svg></div>
              <div class="rows"><div>GRENADIER</div><div>2021, 3.0L 6-CYLINDER PETROL, 8-SPEED AUTOMATIC, ALL, LWB STATION<br>WAGON</div><div>FUEL PREPARATION - PETROL OVERVIEW</div></div>
            </div>
            <svg class="engine"><use href="#engine"/></svg>
          </article>
        </div>
        <div class="scroll"><i class="up"></i><i class="down"></i></div>
        <div class="settings">
          <div class="set-head"><h1>Print</h1><b>7 sheets of paper</b></div>
          <div class="field"><label>Destination</label><div class="select"><svg class="prn"><use href="#i-print"/></svg><span></span><i></i></div></div>
          <div class="field"><label>Pages</label><div class="select"><span>All</span><i></i></div></div>
        </div>
        <div class="fabs"><div class="fab fit"><svg><use href="#i-full"/></svg></div><div class="fab"><svg><use href="#i-plus"/></svg></div><div class="fab"><svg><use href="#i-minus"/></svg></div></div>
      </div>
      <div class="mark mark-all"></div>
    </div>
  </section>

  <section class="frame frame-front">
    <div class="screen">
      <header class="tabs">
        <div class="tab"><svg class="favicon"><use href="#i-globe"/></svg><span class="tab-title">Fuel Preparation - Petrol Overview</span><svg class="tab-x"><use href="#i-x"/></svg></div>
        <svg class="tab-add"><use href="#i-add"/></svg>
        <div class="controls"><svg><use href="#i-wdown"/></svg><svg><use href="#i-wmin"/></svg><svg><use href="#i-wmax"/></svg><svg><use href="#i-wclose"/></svg></div>
      </header>
      <nav class="toolbar">
        <div class="history"><svg class="dim"><use href="#i-back"/></svg><svg class="dim"><use href="#i-fwd"/></svg><svg><use href="#i-reload"/></svg></div>
        <div class="omnibox"><svg class="info"><use href="#i-info"/></svg><span class="url"><em>localhost</em>:62286/TOPIC_0000000010.htm</span><svg class="share"><use href="#i-share"/></svg><svg class="star"><use href="#i-star"/></svg></div>
        <div class="extras"><svg class="ext"><use href="#i-ext"/></svg><svg class="avatar"><use href="#i-person"/></svg><svg class="kebab"><use href="#i-kebab"/></svg></div>
      </nav>
      <div class="app">
        <div class="work">
          <aside class="rail">
            <div class="tool h90"><svg class="s50"><use href="#i-cube"/></svg></div>
            <div class="tool h90"><svg class="s50"><use href="#i-wire"/></svg></div>
            <div class="tool h90 on"><svg><use href="#i-list"/></svg></div>
            <div class="tool h77"><svg><use href="#i-eye"/></svg></div>
            <div class="tool h77"><svg><use href="#i-eyeoff"/></svg></div>
            <div class="tool h91"><svg><use href="#i-bright"/></svg></div>
            <div class="tool h75"><svg><use href="#i-cycle"/></svg></div>
            <div class="tool h79"><svg><use href="#i-help"/></svg></div>
            <div class="tool h78 hover"><svg><use href="#i-print"/></svg></div>
          </aside>
          <div class="player">
            <svg><use href="#i-play"/></svg><svg class="off"><use href="#i-pause"/></svg><svg><use href="#i-stop"/></svg><svg class="prev"><use href="#i-prev"/></svg><svg><use href="#i-next"/></svg>
            <div class="slider"><span class="knob"></span><span class="track"></span></div>
          </div>
        </div>
        <div class="panel"><div class="panel-tabs"><div class="panel-tab"></div><div class="panel-tab">Details</div></div><div class="panel-body"></div></div>
      </div>
      <footer class="taskbar">
        <div class="start"><svg><use href="#t-win"/></svg></div>
        <div class="search"><svg><use href="#t-search"/></svg><span>Type here to search</span></div>
        <div class="apps">
          <div class="task"><svg><use href="#t-cortana"/></svg></div><div class="task"><svg><use href="#t-view"/></svg></div><div class="task"><svg><use href="#t-edge"/></svg></div><div class="task"><svg><use href="#t-mail"/></svg></div><div class="task"><svg><use href="#t-store"/></svg></div><div class="task"><svg><use href="#t-folder"/></svg></div><div class="task run"><svg><use href="#t-check"/></svg></div><div class="task run"><svg><use href="#t-outlook"/></svg></div><div class="task run"><svg><use href="#t-teams"/></svg></div><div class="task run"><svg><use href="#t-shield"/></svg></div><div class="task run"><svg><use href="#t-idm"/></svg></div><div class="task run"><svg><use href="#t-drop"/></svg></div><div class="task run"><svg><use href="#t-rm"/></svg></div><div class="task run current"><svg><use href="#t-chrome"/></svg></div><div class="task run"><svg><use href="#t-rt"/></svg></div>
        </div>
        <div class="tray">
          <svg class="tr-help"><use href="#t-help"/></svg><svg class="tr-sun"><use href="#t-sun"/></svg><span class="temp">5°C</span><svg class="tr-up"><use href="#t-up"/></svg><svg class="tr-batt"><use href="#t-batt"/></svg><svg class="tr-net"><use href="#t-net"/></svg><svg class="tr-vol"><use href="#t-vol"/></svg>
          <div class="clock"><span>15:23</span><span>05/01/2022</span></div>
          <svg class="tr-note"><use href="#t-note"/></svg><span class="peek"></span>
        </div>
      </footer>
      <div class="dialog">
        <div class="preview">
          <article class="sheet">
            <div class="sheet-head">
              <div class="logo"><svg viewBox="0 0 129 50"><text class="serif" x="0" y="24.500" textLength="25" lengthAdjust="spacingAndGlyphs">IN</text><text class="heavy" x="27" y="24.500" textLength="19" lengthAdjust="spacingAndGlyphs">E</text><text class="ring" transform="translate(47.500 26.200) rotate(-90)" textLength="27.500" lengthAdjust="spacingAndGlyphs" x="0" y="23">O</text><text class="heavy" x="72.500" y="24.500" textLength="18" lengthAdjust="spacingAndGlyphs">S</text><text class="brand" x="0" y="47.500" textLength="129" lengthAdjust="spacingAndGlyphs">Automotive</text></svg></div>
              <div class="rows"><div>GRENADIER</div><div>2021, 3.0L 6-CYLINDER PETROL, 8-SPEED AUTOMATIC, ALL, LWB STATION<br>WAGON</div><div>FUEL PREPARATION - PETROL OVERVIEW</div></div>
            </div>
            <svg class="engine"><use href="#engine"/></svg>
          </article>
        </div>
        <div class="scroll"><i class="up"></i><i class="thumb"></i><i class="down"></i></div>
        <div class="settings">
          <div class="set-head"><h1>Print</h1><b>7 sheets of paper</b></div>
          <div class="field"><label>Destination</label><div class="select"><svg class="prn"><use href="#i-print"/></svg><span>Brother DCP-9020CDW</span><i></i></div></div>
          <div class="field"><label>Pages</label><div class="select"><span>All</span><i></i></div></div>
          <div class="field"><label>Copies</label><div class="select short"><span>1</span></div></div>
          <div class="field"><label>Colour</label><div class="select"><span>Colour</span><i></i></div></div>
          <div class="more"><span>More settings</span><svg><use href="#i-expand"/></svg></div>
          <div class="actions"><div class="btn primary">Print</div><div class="btn">Cancel</div></div>
        </div>
        <div class="fabs"><div class="fab fit"><svg><use href="#i-fullexit"/></svg></div><div class="fab"><svg><use href="#i-plus"/></svg></div><div class="fab"><svg><use href="#i-minus"/></svg></div></div>
      </div>
      <div class="mark mark-fit"></div>
    </div>
  </section>
</main>
</body>
</html>
```
FILE: styles.css
```css
* { box-sizing: border-box; }
html, body { margin: 0; width: 4096px; height: 2304px; overflow: hidden; background: #fff; }
.sprite { position: absolute; width: 0; height: 0; }
svg { display: block; flex: none; fill: currentColor; }

.canvas { position: relative; width: 4170px; height: 2346px; transform: scale(.98225, .9821); transform-origin: 0 0; }

/* Two overlapping captures, each a 1920x1080 desktop stretched to its frame */
.frame { position: absolute; border: solid #000; }
.frame-back { left: 122px; top: 58px; width: 2540px; height: 1695px; border-width: 11px 10px; }
.frame-front { left: 1491px; top: 510px; width: 2595px; height: 1761px; border-width: 18px 17px; }
.screen {
  display: flex; flex-direction: column; position: relative;
  width: 1920px; height: 1080px; background: #fff; overflow: hidden;
  font-family: "Open Sans", "Noto Sans", sans-serif; color: #202124; transform-origin: 0 0;
}
.frame-back .screen { margin: 14px 0 0 18px; transform: scale(1.3, 1.526); }
.frame-front .screen { margin: 5px 0 0 16px; transform: scale(1.312, 1.572); }

/* Browser chrome */
.tabs { display: flex; align-items: center; height: 42px; flex: none; background: #dee1e6; padding-left: 10px; }
.tab { position: relative; display: flex; align-items: center; width: 300px; height: 42px; padding: 0 14px 0 16px; background: #fff; border-radius: 10px 10px 0 0; }
.tab::before, .tab::after { content: ""; position: absolute; bottom: 0; width: 10px; height: 10px; }
.tab::before { left: -10px; background: radial-gradient(circle at 0 0, #dee1e6 9.5px, #fff 10px); }
.tab::after { right: -10px; background: radial-gradient(circle at 100% 0, #dee1e6 9.5px, #fff 10px); }
.favicon { width: 18px; height: 18px; color: #5f6368; }
.tab-title { flex: 1; margin: 0 10px 0 11px; font-size: 14.6px; letter-spacing: -.42px; color: #45494d; white-space: nowrap; overflow: hidden; -webkit-mask-image: linear-gradient(90deg, #000 87%, transparent); mask-image: linear-gradient(90deg, #000 87%, transparent); }
.tab-x { width: 12px; height: 12px; color: #3c4043; }
.tab-add { width: 16px; height: 16px; margin-left: 19px; color: #3c4043; }
.controls { display: flex; gap: 43px; margin: -6px 22px 0 auto; }
.controls svg { width: 14px; height: 14px; color: #222; }
.toolbar { display: flex; align-items: center; height: 47px; flex: none; padding: 0 24px 0 17px; border-bottom: 2px solid #d5d6d8; color: #5f6368; }
.history { display: flex; gap: 20px; width: 118px; }
.history svg { width: 20px; height: 20px; }
.history .dim { color: #babcbe; }
.omnibox { display: flex; align-items: center; width: 1649px; height: 35px; margin-top: 1px; padding: 0 10px 0 14px; border-radius: 18px; background: #f1f3f4; }
.info { width: 18px; height: 18px; }
.url { flex: 1; margin: -1px 0 0 10px; font-size: 17px; letter-spacing: -.27px; white-space: nowrap; }
.url em { font-style: normal; color: #202124; }
.share { width: 20px; height: 20px; margin-right: 19px; }
.star { width: 22px; height: 22px; }
.extras { display: flex; align-items: center; margin-left: 17px; }
.ext { width: 24px; height: 24px; }
.avatar { width: 36px; height: 28px; margin-left: 10px; }
.kebab { width: 6px; height: 22px; margin-left: 19px; }

/* Application behind the dialog */
.app { display: flex; flex: 1; min-height: 0; }
.work { display: flex; flex-direction: column; width: 1152px; }
.rail { width: 96px; padding-left: 5.5px; color: #00142b; }
.tool { display: flex; align-items: center; justify-content: center; }
.tool svg { width: 62.5px; height: 62.5px; }
.tool .s50 { width: 50px; height: 50px; }
.h90 { height: 90px; } .h77 { height: 77.3px; } .h78 { height: 78px; } .h91 { height: 90.5px; } .h75 { height: 74.5px; } .h79 { height: 79px; }
.on { background: #00142b; color: #fff; }
.hover { background: #f4f4f4; }
.player { display: flex; align-items: center; gap: 44.3px; height: 70px; margin-top: auto; padding-left: 184.5px; color: #212121; }
.player svg { width: 25px; height: 25px; }
.player .off { color: #bdbdbd; margin-left: -1.5px; }
.player .prev { margin-left: 1.5px; }
.slider { display: flex; align-items: center; margin-left: -23px; }
.knob { width: 26px; height: 26px; border-radius: 50%; background: #000; }
.track { width: 445px; height: 10px; margin-top: 3px; background: #9e9e9e; }
.panel { display: flex; flex-direction: column; gap: 6px; width: 768px; }
.panel-tabs { display: flex; gap: 6px; height: 54px; }
.panel-tab { flex: 1; display: flex; align-items: center; justify-content: center; background: #bacfda; font-size: 17px; letter-spacing: -.2px; color: #111; }
.panel-tab:first-child { flex: 0 0 512px; }
.panel-body { flex: 1; background: #bacfda; }

/* Taskbar */
.taskbar { display: flex; height: 50px; flex: none; background: #28292d; color: #fff; }
.start { display: flex; align-items: center; justify-content: center; width: 60px; }
.start svg { width: 27px; height: 22px; }
.search { display: flex; align-items: center; width: 429px; border: 1.5px solid #bdbdbd; background: #f1f1f1; color: #3d3d3d; font-size: 18.2px; letter-spacing: -.25px; }
.search span { margin-top: 1px; }
.search svg { width: 25px; height: 24px; margin: -4px 15px 0 14px; }
.apps { display: flex; }
.task { display: flex; align-items: center; justify-content: center; width: 62px; position: relative; }
.task svg { width: 30px; height: 30px; }
.run::after { content: ""; position: absolute; left: 5.5px; right: 5.5px; bottom: 0; height: 3px; background: #76b1e0; }
.current { background: linear-gradient(#505154, #505154) center / 60px 100% no-repeat; }
.current::after { left: 1px; right: 1px; }
.tray { display: flex; align-items: center; padding-left: 76px; }
.tr-help, .tr-sun { width: 24px; height: 24px; }
.tr-sun { margin-left: 44px; }
.temp { width: 28px; margin: 2px 0 0 12px; font-size: 16px; letter-spacing: -.4px; }
.tr-up { width: 20px; height: 12px; margin-left: 18px; }
.tr-batt { width: 22px; height: 16px; margin-left: 9px; }
.tr-net { width: 22px; height: 18px; margin-left: 9px; }
.tr-vol { width: 22px; height: 18px; margin-left: 8px; }
.clock { display: flex; flex-direction: column; align-items: center; gap: 5px; width: 80px; margin-left: 8px; font-size: 14.8px; line-height: 19px; letter-spacing: -.55px; }
.tr-note { width: 34px; height: 32px; margin-left: 21px; }
.peek { width: 1px; height: 50px; margin-left: 13px; background: #777; }
.glyph { font: 700 11px "Open Sans", sans-serif; fill: #fff; text-anchor: middle; }
.teal { fill: #5bc8b8; } .red { fill: #f0401c; }
.big { font-size: 17px; } .wide { font-size: 14px; font-weight: 600; }

/* Print dialog */
.dialog { position: absolute; left: 310px; top: 83px; display: flex; width: 1300px; height: 858px; background: #fff; box-shadow: 0 2px 7px rgba(0, 0, 0, .3); font-family: Roboto, sans-serif; clip-path: inset(-1px -6px -14px -6px); }
.preview { display: flex; flex-direction: column; align-items: center; width: 798px; overflow: hidden; background: #d9dbe0; }
.sheet { position: relative; flex: none; width: 60.1em; height: 90em; background: #fff; box-shadow: 0 0 4px 1px rgba(60, 64, 70, .5); }
.frame-back .sheet { font-size: 10px; margin-top: 10px; }
.frame-front .sheet { font-size: 12.77px; margin-top: 4px; }
.sheet-end { flex: none; width: 601px; height: 5.5px; background: #fff; box-shadow: 0 1px 4px 1px rgba(60, 64, 70, .5); }
.sheet-head { display: flex; height: 10.4em; border-bottom: 3px double #111; }
.logo { width: 17.95em; border-right: 1px solid #222; padding: 1.4em 0 0 2.25em; color: #1f1452; }
.logo svg { width: 12.9em; height: 5em; overflow: visible; }
.logo text { fill: #1f1452; }
.serif { font: 35px "Liberation Serif", serif; }
.heavy { font: 900 33px Lato, sans-serif; }
.ring { font: 700 35px "Liberation Serif", serif; }
.brand { font: 900 25.500px Lato, sans-serif; }
.rows { flex: 1; display: grid; grid-template-rows: 2.87em 4.42em 1fr; font-family: "Open Sans", sans-serif; text-align: center; color: #111; }
.rows div { display: flex; flex-direction: column; justify-content: center; align-items: center; padding-top: .1em; border-bottom: 1px solid #222; font-size: 1.27em; line-height: 1.32; letter-spacing: -.053em; white-space: nowrap; }
.rows div:last-child { padding-top: .16em; border-bottom: 0; }
.engine { position: absolute; left: 12.95em; top: 29.3em; width: 38.46em; height: 43.25em; }
.scroll { display: flex; flex-direction: column; align-items: center; width: 22px; padding: 12px 0 6px; background: #f0f0f0; }
.scroll i { width: 0; border: 5.5px solid transparent; }
.scroll .up { border-top: 0; border-bottom: 8px solid #4d4d4d; }
.scroll .down { border-bottom: 0; border-top: 8px solid #4d4d4d; margin-top: auto; }
.scroll .thumb { width: 20px; height: 92px; margin-top: 235px; border: 0; background: #c1c1c1; }
.frame-back .up { margin-top: -3px; }
.settings { display: flex; flex-direction: column; width: 480px; font-size: 16.25px; color: #2c2f33; }
.set-head { display: flex; justify-content: space-between; align-items: center; height: 83px; padding: 0 30px; }
.set-head h1 { margin: 0; font-size: 20px; font-weight: 400; }
.set-head b { font-weight: 500; color: #202124; letter-spacing: -.05px; }
.field { display: flex; align-items: center; height: 67.4px; padding-left: 30.5px; }
.set-head + .field { margin-top: -6px; }
.field label { width: 179.5px; }
.select { display: flex; align-items: center; width: 240px; height: 40px; padding: 0 10px 1px 10.5px; border-radius: 5px; background: #f1f3f4; }
.select.short { width: 85px; }
.select span { flex: 1; white-space: nowrap; overflow: hidden; }
.select i { width: 0; border: 6.500px solid transparent; border-top: 8px solid #5f6368; border-bottom: 0; }
.prn { width: 25px; height: 25px; margin: 0 10px 0 -5.5px; color: #80868b; }
.select .prn + span { margin-right: 18px; }
.more { display: flex; align-items: center; justify-content: space-between; height: 92px; margin-top: 11px; padding: 0 38px 0 30.5px; border-top: 1.5px solid #e8eaed; }
.more svg { width: 12px; height: 12px; color: #444; }
.actions { display: flex; justify-content: flex-end; gap: 10px; margin: auto 20px 19px 0; }
.btn { display: flex; align-items: center; justify-content: center; width: 92px; height: 40px; border: 1.3px solid #dadce0; border-radius: 5px; color: #1a73e8; font-weight: 500; }
.primary { width: 84px; border: 0; background: #1a73e8; color: #fff; }
.fabs { position: absolute; left: 50.5px; top: 636px; display: flex; flex-direction: column; gap: 12px; }
.fab { display: flex; align-items: center; justify-content: center; width: 40px; height: 40px; border-radius: 50%; background: #80868b; color: #fff; box-shadow: 0 1.5px 4px rgba(0, 0, 0, .45); }
.fab svg { width: 26px; height: 26px; }
.fit { margin-bottom: 18px; }
.mark { position: absolute; border: solid #ed1c24; }
.mark-all { left: 338px; top: 704px; width: 82.5px; height: 193.5px; border-width: 7px; }
.mark-fit { left: 333px; top: 694.5px; width: 88.5px; height: 87.5px; border-width: 11px 13px; }
```
